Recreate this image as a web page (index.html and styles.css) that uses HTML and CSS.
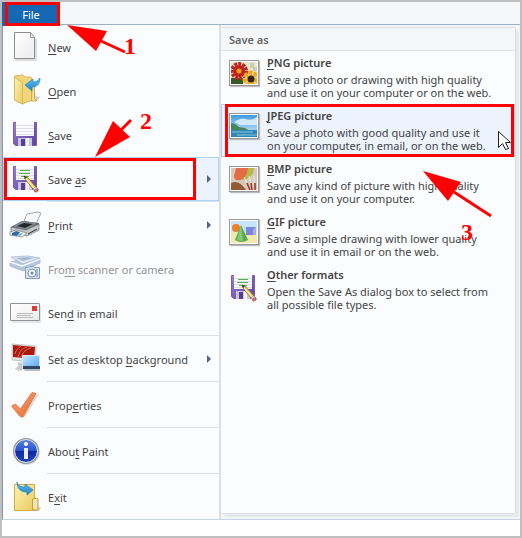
FILE: index.html
```html
<!DOCTYPE html>
<html lang="en">
<head>
<meta charset="utf-8">
<title>Paint - File menu</title>
<meta name="viewport" content="width=device-width, initial-scale=1">
<link rel="stylesheet" href="styles.css">
</head>
<body>
<svg class="defs" aria-hidden="true">
  <defs>
    <linearGradient id="paper" x2="1" y2="1"><stop offset="0" stop-color="#fff"/><stop offset="1" stop-color="#ececec"/></linearGradient>
    <linearGradient id="folder" x2="1" y2="1"><stop offset="0" stop-color="#fdf3b0"/><stop offset="1" stop-color="#ecca62"/></linearGradient>
    <linearGradient id="blue" x2="0" y2="1"><stop offset="0" stop-color="#62c4f2"/><stop offset="1" stop-color="#1f7fc8"/></linearGradient>
    <linearGradient id="purple" x2="1" y2="1"><stop offset="0" stop-color="#9a7fd0"/><stop offset="1" stop-color="#5f3f9e"/></linearGradient>
    <linearGradient id="sky" x2="0" y2="1"><stop offset="0" stop-color="#3f9be0"/><stop offset="1" stop-color="#d8f0fb"/></linearGradient>
    <linearGradient id="screen" x2="1" y2="1"><stop offset="0" stop-color="#c9e8ff"/><stop offset="1" stop-color="#4fa5f0"/></linearGradient>
    <linearGradient id="info" x2="0" y2="1"><stop offset="0" stop-color="#5d86e6"/><stop offset=".5" stop-color="#2a50c8"/><stop offset=".52" stop-color="#0d2aa6"/><stop offset="1" stop-color="#2044c0"/></linearGradient>
    <linearGradient id="tick" x2="1" y2="1"><stop offset="0" stop-color="#f9a878"/><stop offset="1" stop-color="#e4682f"/></linearGradient>
    <symbol id="floppy" viewBox="0 0 32 32">
      <path d="M4.500 4.500h23v23h-21l-2-2z" fill="url(#purple)" stroke="#7b5cb5"/>
      <path d="M7 4h18v14H7z" fill="#fbfbfd"/>
      <path d="M7 7.500h18M7 10.500h18M7 13.500h18M7 16.500h18" stroke="#dedee8"/>
      <path d="M9 20h14v8H9z" fill="#c9c5dc"/><path d="M12 21h4v7h-4z" fill="#5b3c94"/><path d="M17 20h3v8h-3z" fill="#f2f1f7"/>
    </symbol>
    <symbol id="saveas" viewBox="0 0 32 32">
      <use href="#floppy"/>
      <path d="M11 8.500h10M10 11.500h11M12 14.500h8" stroke="#4bb54b"/>
      <path d="M15 14l3 1 9 10-3 2-8-10z" fill="#f3d677" stroke="#8c6a2c" stroke-width=".8"/>
      <path d="M17 17l8 9" stroke="#fff2b8"/><path d="M15 14l3 1-2 2z" fill="#333"/>
      <path d="M25 28l2-3 2 2c1 2-1 3-3 3z" fill="#d76a5e" stroke="#8b5b50" stroke-width=".8"/><path d="M24 27l3-2 1 1-3 2z" fill="#ddd"/>
    </symbol>
  </defs>
</svg>
<main class="window">
  <header class="tabs">
    <button class="tab marked" type="button">File</button>
  </header>
  <div class="menu">
    <nav class="commands" aria-label="File">
      <button class="command" type="button">
        <svg class="icon" viewBox="0 0 32 32"><path d="M6 30h21V9" fill="none" stroke="#ddd" stroke-width="2"/><path d="M5.500 2.500h16l4 5v21h-20z" fill="url(#paper)" stroke="#8d8d8d"/><path d="M21.500 2.500v5h4z" fill="#fff" stroke="#999"/></svg>
        <span><u>N</u>ew</span></button>
      <button class="command" type="button">
        <svg class="icon" viewBox="0 0 32 32"><path d="M14 29l15-3 2-3-4-1z" fill="#d2d2d2"/><path d="M5.500 2l8-1 3 2h5l1 1v22l-9 4-8-4z" fill="#f2d67a" stroke="#d6b558"/><path d="M23 11h2.500v14l2 1v1h-5z" fill="#f7e08b" stroke="#d0ac4b"/><path d="M5.500 3l8 6v21l-8-4z" fill="url(#folder)" stroke="#dab95e"/><path d="M31 4c0 6-3 9-8 9v4l-7-6 8-6v3c3 0 5-1 7-4z" fill="url(#blue)" stroke="#2488c8" stroke-width=".7"/></svg>
        <span><u>O</u>pen</span></button>
      <button class="command" type="button"><svg class="icon"><use href="#floppy"/></svg><span><u>S</u>ave</span></button>
      <button class="command current" type="button" aria-haspopup="true" aria-expanded="true"><svg class="icon"><use href="#saveas"/></svg><span>Save <u>a</u>s</span><i class="more"></i></button>
      <hr>
      <button class="command" type="button" aria-haspopup="true">
        <svg class="icon" viewBox="0 0 32 32"><path d="M15 13l3-7 11-2 3 1-5 11z" fill="#f8f8fa" stroke="#a5a5a5"/><path d="M2 19l11-6 17 2v5l-13 7-15-4z" fill="#62666c"/><path d="M4 18l9-5 15 2-11 7z" fill="#85898f"/><path d="M8 18l7-3 9 1-8 4z" fill="#24272c"/><path d="M2 19l15 3 13-6v6l-12 6-16-4z" fill="#c4c7cb" stroke="#6a6d72" stroke-width=".7"/><path d="M1 24l6-2 11 3-5 4-12-2z" fill="#f4f6f8" stroke="#777" stroke-width=".7"/><path d="M3 25l4-2 4 1-3 4-5-1z" fill="#3768a6"/><path d="M9 26l5-1-3 3-3-1z" fill="#59b7c8"/><path d="M19 26l9-5" stroke="#333"/></svg>
        <span><u>P</u>rint</span><i class="more"></i></button>
      <button class="command" type="button" disabled>
        <svg class="icon" viewBox="0 0 32 32"><path d="M1 10L23 5l8 2v4l-17 8L1 14z" fill="#b7c6df" stroke="#9fb0cc" stroke-width=".7"/><path d="M1 10l12 4 18-7" fill="none" stroke="#f6f9ff" stroke-width="1.500"/><path d="M2 5l16-1 13 2-17 6z" fill="#dfe8f5" stroke="#9eb0cc" stroke-width=".7"/><path d="M7 6l11-1 7 1-11 3z" fill="#a5b8d4"/><path d="M16.500 15.500h3l1-1h4l1 1h5v11h-14z" fill="#d5e0f1" stroke="#899dbd"/><circle cx="23" cy="21" r="4" fill="#f6f9ff" stroke="#7d91b3"/><circle cx="23" cy="21" r="1.500" fill="#7186aa"/><path d="M28 17v8" stroke="#7d91b3"/></svg>
        <span>Fro<u>m</u> scanner or camera</span></button>
      <button class="command" type="button">
        <svg class="icon" viewBox="0 0 32 32"><path d="M3 26h29V9" fill="none" stroke="#d2d2d2"/><path d="M1.500 7.500h29v17h-29z" fill="url(#paper)" stroke="#929292"/><path d="M23 10h5v5h-5z" fill="#dc3c35"/><path d="M8 17.500h16M8 19.500h14M8 21.500h16" stroke="#bbb"/></svg>
        <span>Sen<u>d</u> in email</span></button>
      <hr>
      <button class="command" type="button" aria-haspopup="true">
        <svg class="icon" viewBox="0 0 32 32"><path d="M9 20l5 1v3l4 2-8 3-4-2 3-3z" fill="#c8cacc"/><path d="M3 2l24 2-1 16-23-2z" fill="#e3e3e4" stroke="#aaa" stroke-width=".6"/><path d="M4 3l22 2-1 12-21-2z" fill="#a91b12"/><path d="M9 15c2-6 4-9 9-10M12 15c2-5 5-8 10-9M6 12c1-4 3-6 6-8" fill="none" stroke="#e86b42"/><path d="M14 26h17v3H16z" fill="#b9bcc0"/><path d="M13.500 13.500h17v13h-17z" fill="url(#screen)" stroke="#e2e5e8"/><path d="M14 24h17v3H14z" fill="#31475f"/></svg>
        <span>Set as desktop <u>b</u>ackground</span><i class="more"></i></button>
      <hr>
      <button class="command" type="button">
        <svg class="icon" viewBox="0 0 32 32"><path d="M5 18l8 11 4-3L29 6" fill="none" stroke="#ddd" stroke-width="2"/><path d="M2.500 18l4-2 5 5L23 4.500l4 1L14 29l-3-.5z" fill="url(#tick)" stroke="#e77c4c" stroke-linejoin="round"/></svg>
        <span>Prop<u>e</u>rties</span></button>
      <hr>
      <button class="command" type="button">
        <svg class="icon" viewBox="0 0 32 32"><circle cx="18" cy="18" r="13" fill="#ddd"/><circle cx="17" cy="17" r="12" fill="url(#info)" stroke="#8d929b" stroke-width="2"/><circle cx="17" cy="17" r="11.500" fill="none" stroke="#dde3ef"/><circle cx="17" cy="10" r="2" fill="#fff"/><path d="M15 14h4v11h-4z" fill="#e9edf7"/></svg>
        <span>Abou<u>t</u> Paint</span></button>
      <hr>
      <button class="command" type="button">
        <svg class="icon" viewBox="0 0 32 32"><path d="M25 31h5l2-3-3-1z" fill="#ccc"/><path d="M5.500 4.500h20v26h-20z" fill="url(#folder)" stroke="#d2ab42"/><path d="M23.500 19l4-1 1.500 1v11h-5.500z" fill="#f8e79d" stroke="#c59c39"/><path d="M26 21h2v5h-2z" fill="#c9e5f2"/><path d="M8 2c1 4 4 5 8 5V4l8 6-6 5v-3c-6 0-10-3-10-10z" fill="url(#blue)" stroke="#1e83bf" stroke-width=".7"/></svg>
        <span>E<u>x</u>it</span></button>
    </nav>
    <section class="submenu" aria-labelledby="submenu-title">
      <h2 id="submenu-title">Save as</h2>
      <button class="format" type="button">
        <svg class="icon picture" viewBox="0 0 26 22"><path d="M0 0h26v22H0z" fill="#ece7cc"/><path d="M19 1h4v4h3v4h-4V6h-3z" fill="#c5cfb4"/><path d="M0 16h12v6H0z" fill="#355b27"/><circle cx="8" cy="9" r="7" fill="none" stroke="#b92720" stroke-width="4" stroke-dasharray="3 1"/><circle cx="8" cy="9" r="6" fill="#c5211c"/><circle cx="8" cy="9" r="2.500" fill="#e5a622"/><circle cx="20" cy="17" r="6" fill="none" stroke="#f4a91b" stroke-width="5" stroke-dasharray="4 1"/><circle cx="20" cy="17" r="3.500" fill="#332313"/></svg>
        <span class="text"><strong><u>P</u>NG picture</strong><span>Save a photo or drawing with high quality<br>and use it on your computer or on the web.</span></span></button>
      <button class="format current marked" type="button">
        <svg class="icon picture" viewBox="0 0 26 22"><path d="M0 0h26v22H0z" fill="url(#sky)"/><path d="M3 7q7-5 12-3t11-2v8H9z" fill="#e8f6fd" opacity=".8"/><path d="M0 8l4 1 4 3 6 1 5 3H0z" fill="#45845c"/><path d="M0 15h26v7H0z" fill="#3186b5"/><path d="M1 17h21M6 20h20" stroke="#84c6dc"/></svg>
        <span class="text"><strong><u>J</u>PEG picture</strong><span>Save a photo with good quality and use it<br>on your computer, in email, or on the web.</span></span></button>
      <button class="format" type="button">
        <svg class="icon picture" viewBox="0 0 26 22"><path d="M0 0h26v22H0z" fill="#d4cbbd"/><path d="M15 0h8q0 7-7 11l-5 1-1-5z" fill="#b7b84a"/><path d="M5 0h12q-1 10-8 12-6 1-6-4z" fill="#e46b43"/><path d="M0 15q8-4 15 7H0z" fill="#945a36"/><path d="M13 9l5 10M18 8l3 11M23 8v12" stroke="#f1ede2"/><path d="M16 15l3 7M20 15l1 7M24 15v7" stroke="#9d3026" stroke-width="1.500"/></svg>
        <span class="text"><strong><u>B</u>MP picture</strong><span>Save any kind of picture with high quality<br>and use it on your computer.</span></span></button>
      <button class="format" type="button">
        <svg class="icon picture" viewBox="0 0 26 22"><path d="M0 0h26v12H0z" fill="#c4e5fb"/><path d="M0 11h26v11H0z" fill="#f3e8ae"/><path d="M15 6h10v8H15z" fill="#7b88da"/><path d="M22 8l3-2v8h-3z" fill="#a3abe8"/><circle cx="5" cy="7" r="4" fill="#ec812e"/><path d="M10 4l7 15q-7 4-13 0z" fill="#5aaa55"/><path d="M10 4l2 16-6-1z" fill="#86ca76"/></svg>
        <span class="text"><strong><u>G</u>IF picture</strong><span>Save a simple drawing with lower quality<br>and use it in email or on the web.</span></span></button>
      <button class="format" type="button">
        <svg class="icon"><use href="#saveas"/></svg>
        <span class="text"><strong><u>O</u>ther formats</strong><span>Open the Save As dialog box to select from<br>all possible file types.</span></span></button>
    </section>
  </div>
  <footer class="status"></footer>
</main>
<svg class="notes" width="522" height="538" viewBox="0 0 522 538">
  <g fill="red" stroke="none"><path d="M67 25l40 6-11 20zM95 157l18-36 17 16zM423 171l38 11-13 19z"/></g>
  <path d="M101 41l24 11M121 130l10-10M454 192l37 24" stroke="red" stroke-width="3"/>
  <path d="M5.500 159.500h189v39H5.500z" fill="none" stroke="red" stroke-width="3"/>
  <g class="digits"><text x="124" y="54">1</text><text x="140" y="129">2</text><text x="461" y="240">3</text></g>
  <path d="M498.500 131.500v16l4-4 3 6 3-1-3-6h5z" fill="#fff" stroke="#222"/>
</svg>
</body>
</html>
```
FILE: styles.css
```css
* { box-sizing: border-box; }

body {
  margin: 0;
  font: 11px/13px "Noto Sans", "Open Sans", sans-serif;
  color: #444;
}

.defs { position: absolute; width: 0; height: 0; }

.window {
  display: flex;
  flex-direction: column;
  min-height: 100vh;
  border: 2px solid #bfbfbf;
  background: #fff;
}

.tabs {
  display: flex;
  height: 23px;
  border-bottom: 1px solid #9fb1c8;
  background: #f5f6f7;
}

button {
  margin: 0;
  border: 0;
  padding: 0;
  background: none;
  color: inherit;
  font: inherit;
  text-align: left;
}

.marked { position: relative; }

.marked::after {
  content: "";
  position: absolute;
  z-index: 1;
  inset: 0 1px 0 4px;
  border: 3px solid red;
}

.tab {
  width: 58px;
  height: 24px;
  background: #1467b3;
  color: #fff;
  text-align: center;
}

.tab::after { inset: 0 0 0 3px; }

.menu {
  display: grid;
  grid-template-columns: 218px minmax(0, 1fr);
  border-left: 1px solid #8496b4;
  border-bottom: 1px solid #c8d3e1;
  background: #f3f5f7;
}

.commands {
  border-right: 2px solid #dcdfe2;
  background: #fbfcfe;
}

.command {
  display: flex;
  align-items: center;
  gap: 7px;
  width: 100%;
  height: 44px;
  padding: 0 8px 0 6px;
}

.command:disabled { color: #939393; }
.commands .icon { margin-top: -2px; }
.icon { flex: none; width: 32px; height: 32px; }

.current {
  background: #ecf3fc;
  box-shadow: inset 0 0 0 1px #a8d2f7;
}

.command.current { background: linear-gradient(90deg, #fbfcfe 192px, #ecf3fc 192px); }

.more {
  margin-left: auto;
  border: 4px solid transparent;
  border-left-color: #53647f;
  border-right-width: 0;
}

u { text-underline-offset: 2px; }

hr {
  height: 2px;
  margin: 0 0 0 44px;
  border: 0;
  border-top: 1px solid #dcdfe2;
}

.submenu {
  margin: 2px 4px 5px 0;
  border: 1px solid #dcdfe2;
  border-left: 0;
  border-radius: 2px;
  background: #fbfcfe;
  box-shadow: 3px 3px 0 #e7eaec;
}

h2 {
  height: 23px;
  margin: 0;
  border-bottom: 1px solid #dcdfe2;
  padding: 5px 8px;
  background: #f5f6f7;
  font-size: 11px;
  font-weight: 600;
  line-height: 13px;
  color: #666;
}

.format {
  display: flex;
  gap: 8px;
  width: 100%;
  height: 53px;
  padding: 5px 6px;
}

.submenu .icon { margin-top: 3px; }

.submenu .picture {
  width: 30px;
  height: 26px;
  margin: 4px 0 0 2px;
  border: 1px solid #999;
  padding: 1px;
  background: #fff;
  box-shadow: 1px 1px 1px #bbb;
}

.text { display: flex; flex-direction: column; gap: 4px; white-space: nowrap; }
.text strong { font-weight: 600; }

.status { flex: 1; background: #fff; }

.notes {
  position: absolute;
  z-index: 2;
  top: 0;
  left: 0;
  pointer-events: none;
}

.digits { fill: red; font: bold 24px "Liberation Serif", serif; }
```
